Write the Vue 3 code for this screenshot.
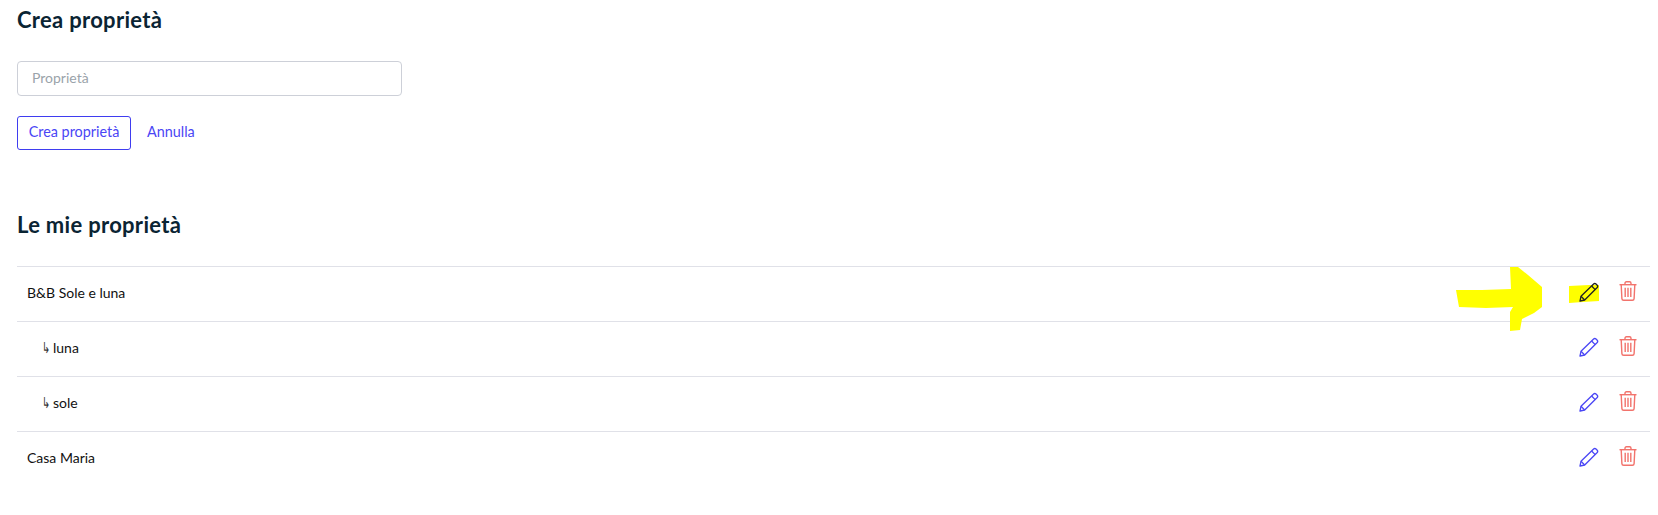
<template>
  <div class="page">
    <h2 class="title">Crea proprietà</h2>
    <input class="field" type="text" placeholder="Proprietà" />
    <div class="actions">
      <button class="btn">Crea proprietà</button>
      <a class="link">Annulla</a>
    </div>

    <h2 class="title list-title">Le mie proprietà</h2>
    <ul class="list">
      <li v-for="(item, i) in items" :key="item.name" class="row" :class="{ child: item.child }">
        <span class="name"><span v-if="item.child" class="sub">↳</span>{{ item.name }}</span>
        <div class="icons">
          <span class="icon-wrap" :class="{ marked: i === 0 }">
            <svg v-if="i === 0" class="scribble" width="30" height="18" viewBox="0 0 30 18">
              <path fill="#ffff00" d="M0 1 L20 0 L30 0 L30 16 L14 17 L0 18 Z" />
            </svg>
            <svg class="pencil" width="20" height="20" viewBox="0 0 20 20" fill="none" stroke="currentColor" stroke-width="1.3" stroke-linejoin="round">
              <path d="M1 19 L2 14.3 L14.6 2 Q15.8 0.9 17 2 L18.2 3.2 Q19.2 4.4 18.2 5.5 L5.7 18 Z" />
              <path d="M12.6 4 L16.2 7.6 M2 14.3 L5.7 18" />
            </svg>
          </span>
          <svg class="trash" width="18" height="20" viewBox="0 0 18 20" fill="none" stroke="currentColor" stroke-width="1.4">
            <path d="M0.5 3.7 H17.5" />
            <path d="M6 3.7 V2.2 Q6 0.8 7.4 0.8 H10.6 Q12 0.8 12 2.2 V3.7" />
            <path d="M2.2 3.7 L2.9 17.6 Q3 19.2 4.6 19.2 H13.4 Q15 19.2 15.1 17.6 L15.8 3.7" />
            <path d="M6.2 6.8 V16 M9 6.8 V16 M11.8 6.8 V16" />
          </svg>
        </div>
      </li>
    </ul>

    <svg class="arrow" width="88" height="66" viewBox="0 0 88 66">
      <path fill="#ffff00" d="M0 23 L26 23 L55 22 L54 0 L62 0 L72 8 L86 20 L86 40 L78 46 L66 52 L64 63 L54 64 L54 45 L57 40 L30 41 L3 40 Z" />
    </svg>
  </div>
</template>

<script setup>
const items = [
  { name: 'B&B Sole e luna', child: false },
  { name: 'luna', child: true },
  { name: 'sole', child: true },
  { name: 'Casa Maria', child: false },
];
</script>

<style>
body {
  background: #fff;
}
</style>

<style scoped>
.page {
  position: relative;
  height: 515px;
  padding: 0 8px 0 17px;
  box-sizing: border-box;
  font-family: Lato, "Liberation Sans", sans-serif;
  overflow: hidden;
}

.title {
  margin: 0;
  padding-top: 6px;
  font-size: 22px;
  line-height: 27px;
  font-weight: 700;
  letter-spacing: 0.3px;
  color: #0a2433;
}

.field {
  display: block;
  box-sizing: border-box;
  width: 385px;
  height: 35px;
  margin-top: 28px;
  padding: 0 14px 2px;
  border: 1px solid #cdd0d8;
  border-radius: 4px;
  font-family: inherit;
  font-size: 14px;
  outline: none;
}

.field::placeholder {
  color: #9aa3aa;
}

.actions {
  display: flex;
  align-items: center;
  gap: 16px;
  margin-top: 20px;
}

.btn {
  box-sizing: border-box;
  width: 114px;
  height: 34px;
  padding: 0 0 3px;
  background: #fff;
  border: 1px solid #3f3df0;
  border-radius: 3px;
  font-family: inherit;
  font-size: 14.4px;
  color: #4a46f5;
}

.link {
  margin-bottom: 3px;
  font-size: 14.4px;
  color: #4a46f5;
}

.list-title {
  margin-top: 55px;
}

.list {
  list-style: none;
  margin: 28px 0 0;
  padding: 0;
}

.row {
  display: flex;
  align-items: center;
  justify-content: space-between;
  box-sizing: border-box;
  height: 55px;
  padding: 0 13px 4px 10px;
  border-top: 1px solid #e0e1e8;
  font-size: 14px;
  color: #111;
}

.row.child {
  padding-left: 25px;
}

.sub {
  display: inline-block;
  width: 11px;
  font-size: 15px;
  line-height: 1;
  color: #333;
  transform: scaleX(0.65);
  transform-origin: left center;
}

.icons {
  display: flex;
  align-items: center;
  gap: 20px;
}

.icon-wrap {
  position: relative;
  display: flex;
  color: #4a46f5;
}

.icon-wrap.marked {
  color: #222;
}

.scribble {
  position: absolute;
  left: -10px;
  top: 3px;
}

.pencil {
  position: relative;
}

.trash {
  margin-bottom: 2px;
  color: #f2736c;
}

.arrow {
  position: absolute;
  left: 1456px;
  top: 267px;
}
</style>
